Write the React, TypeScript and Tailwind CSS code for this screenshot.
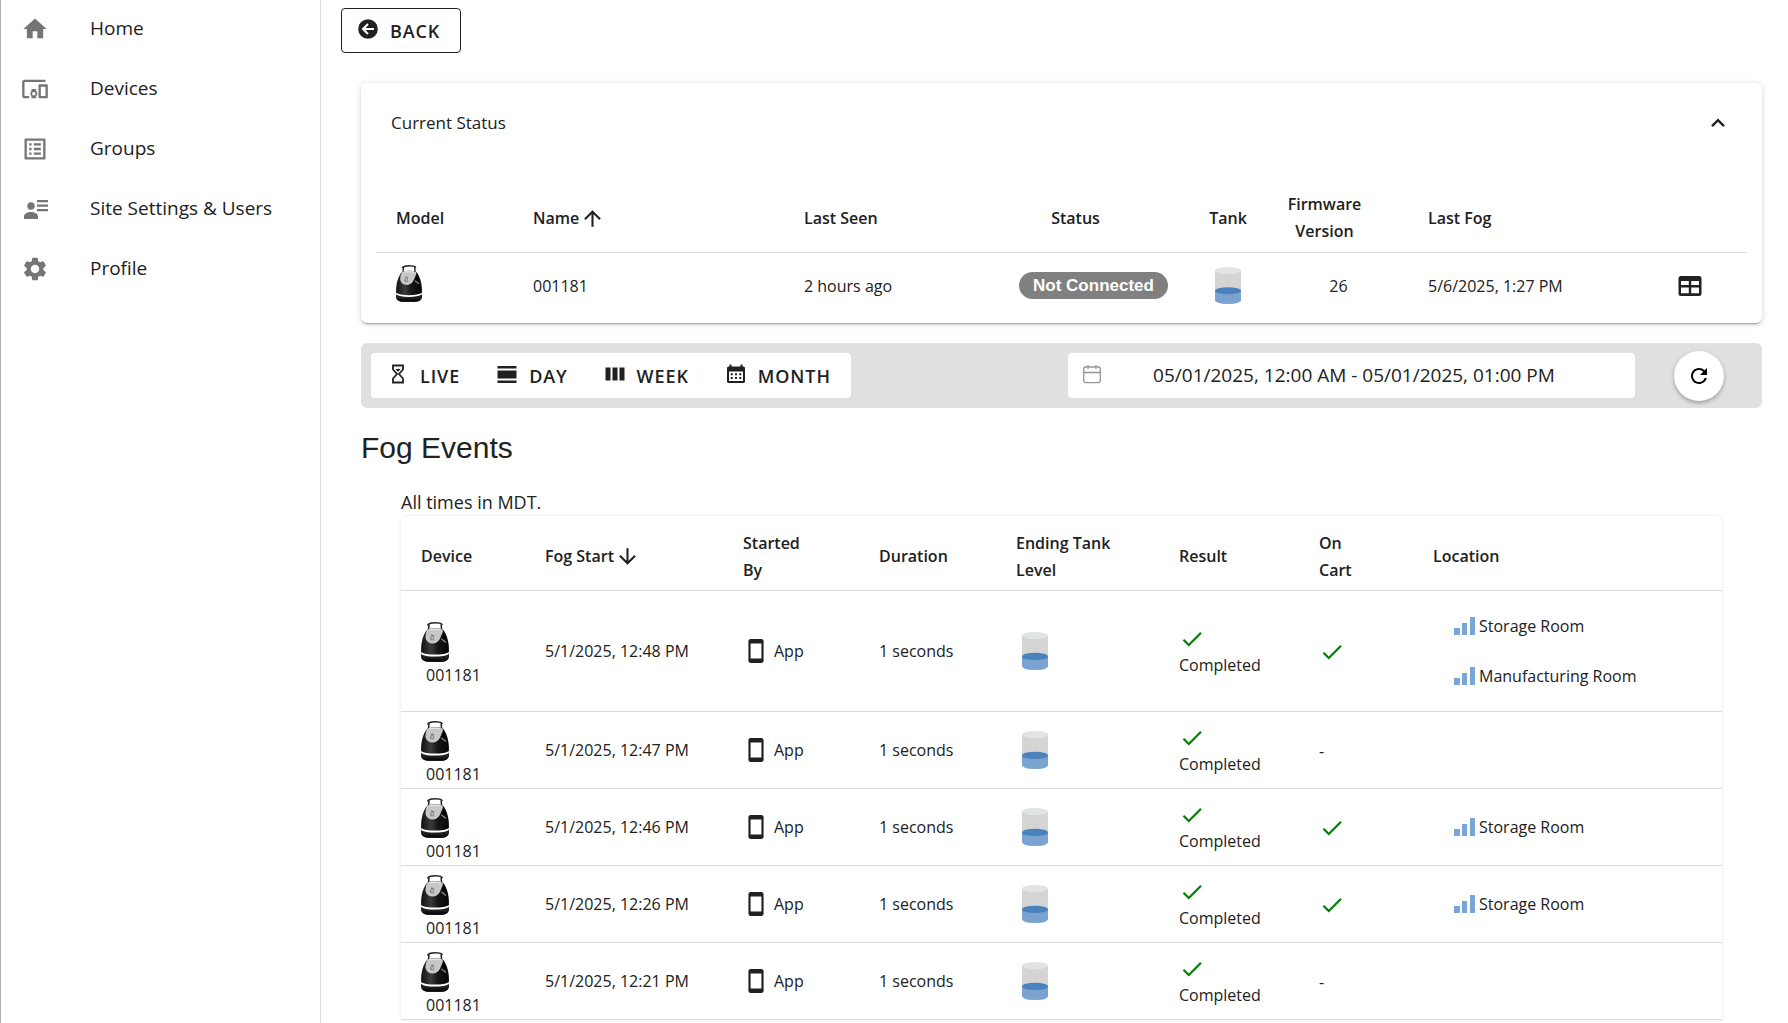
import { useState } from 'react'
import type { ReactNode } from 'react'
import {
  MdArrowDownward,
  MdArrowUpward,
  MdCheck,
  MdDevicesOther,
  MdHome,
  MdOutlineListAlt,
  MdRefresh,
  MdSettings,
  MdStayCurrentPortrait,
} from 'react-icons/md'

interface FogEvent {
  device: string
  start: string
  onCart: boolean
  locations: string[]
}

const EVENTS: FogEvent[] = [
  { device: '001181', start: '5/1/2025, 12:48 PM', onCart: true, locations: ['Storage Room', 'Manufacturing Room'] },
  { device: '001181', start: '5/1/2025, 12:47 PM', onCart: false, locations: [] },
  { device: '001181', start: '5/1/2025, 12:46 PM', onCart: true, locations: ['Storage Room'] },
  { device: '001181', start: '5/1/2025, 12:26 PM', onCart: true, locations: ['Storage Room'] },
  { device: '001181', start: '5/1/2025, 12:21 PM', onCart: false, locations: [] },
]

const NAV: { label: string; icon: ReactNode }[] = [
  { label: 'Home', icon: <MdHome size={28} /> },
  { label: 'Devices', icon: <MdDevicesOther size={28} /> },
  { label: 'Groups', icon: <MdOutlineListAlt size={28} /> },
  { label: 'Site Settings & Users', icon: <UserDetailsIcon /> },
  { label: 'Profile', icon: <MdSettings size={28} /> },
]

export default function App() {
  return (
    <div className="flex min-h-screen border-l border-[#b0b0b0] bg-white font-['Open_Sans',sans-serif] text-base text-[#212121]">
      <Sidebar />
      <main className="min-w-0 flex-1 pt-2">
        <div className="px-5">
          <button className="flex h-[45px] items-center gap-3 rounded border border-[#212121] pr-5 pl-4 text-lg font-semibold tracking-wider">
            <span className="-mt-1">
              <BackIcon />
            </span>
            <span>BACK</span>
          </button>
        </div>
        <div className="pt-[30px] pr-[26px] pl-10">
          <StatusCard />
          <Toolbar />
          <h1 className="mt-5 font-['Liberation_Sans',sans-serif] text-3xl leading-10">Fog Events</h1>
          <section className="mt-5 px-10">
            <p className="text-lg leading-7">All times in MDT.</p>
            <EventTable />
          </section>
        </div>
      </main>
    </div>
  )
}

function Sidebar() {
  return (
    <nav className="w-80 shrink-0 border-r border-[#dcdcdc]">
      <ul>
        {NAV.map((item) => (
          <li key={item.label}>
            <a href="#" className="flex h-[60px] items-center pb-[3px] pl-5 text-[19px]">
              <span className="flex w-[69px] shrink-0 text-[#757575]">{item.icon}</span>
              {item.label}
            </a>
          </li>
        ))}
      </ul>
    </nav>
  )
}

function StatusCard() {
  const [open, setOpen] = useState(true)

  return (
    <section className="rounded-md bg-white shadow-[0_2px_2px_-1px_rgba(0,0,0,0.35),0_1px_6px_rgba(0,0,0,0.16)]">
      <button
        onClick={() => setOpen(!open)}
        className="flex h-20 w-full items-center justify-between pr-9 pl-[30px] text-left text-[17px]"
      >
        <span>Current Status</span>
        <svg width="16" height="10" viewBox="0 0 16 10" className={open ? '' : 'rotate-180'}>
          <path d="M2 8.2 8 2.2l6 6" fill="none" stroke="currentColor" strokeWidth="2.4" />
        </svg>
      </button>
      {open && (
        <div className="px-[15px] pt-[22px] pb-1">
          <table className="w-full table-fixed">
            <colgroup>
              <col className="w-[137px]" />
              <col className="w-[271px]" />
              <col className="w-[216px]" />
              <col className="w-[187px]" />
              <col className="w-[82px]" />
              <col className="w-[139px]" />
              <col className="w-[225px]" />
              <col className="w-[114px]" />
            </colgroup>
            <thead>
              <tr className="h-[67px] border-b border-[#dcdcdc] text-left leading-[27px]">
                <th className="px-5 font-semibold">Model</th>
                <th className="px-5 font-semibold">
                  <span className="flex items-center gap-px">
                    Name
                    <MdArrowUpward size={25} />
                  </span>
                </th>
                <th className="px-5 font-semibold">Last Seen</th>
                <th className="pr-9 text-center font-semibold">Status</th>
                <th className="text-center font-semibold">Tank</th>
                <th className="pr-7 text-center font-semibold">
                  Firmware
                  <br />
                  Version
                </th>
                <th className="px-5 font-semibold">Last Fog</th>
                <th />
              </tr>
            </thead>
            <tbody>
              <tr className="h-[67px]">
                <td className="px-5">
                  <DeviceIcon className="-mt-1 h-[37px] w-[26px]" />
                </td>
                <td className="px-5">001181</td>
                <td className="px-5">2 hours ago</td>
                <td className="text-center">
                  <span className="inline-block rounded-full bg-[#808080] px-[14px] font-['Liberation_Sans',sans-serif] text-[17px] leading-[27px] font-bold text-white">
                    Not Connected
                  </span>
                </td>
                <td>
                  <TankIcon className="mx-auto h-[37px] w-[26px]" />
                </td>
                <td className="text-center">26</td>
                <td className="px-5">5/6/2025, 1:27 PM</td>
                <td>
                  <button className="mx-auto block" aria-label="Details">
                    <GridIcon />
                  </button>
                </td>
              </tr>
            </tbody>
          </table>
        </div>
      )}
    </section>
  )
}

function Toolbar() {
  return (
    <div className="mt-5 flex h-[65px] items-center rounded-md bg-[#e0e0e0] pr-[38px] pl-[10px]">
      <div className="flex h-[45px] rounded bg-white">
        <RangeButton label="LIVE" icon={<HourglassIcon />} />
        <RangeButton label="DAY" icon={<DayIcon />} />
        <RangeButton label="WEEK" icon={<WeekIcon />} />
        <RangeButton label="MONTH" icon={<MonthIcon />} />
      </div>
      <label className="ml-auto flex h-[45px] w-[567px] items-center rounded bg-white pl-[15px]">
        <CalendarIcon />
        <input
          type="text"
          aria-label="Date range"
          defaultValue="05/01/2025, 12:00 AM - 05/01/2025, 01:00 PM"
          className="min-w-0 flex-1 pr-7 text-center text-[19px] outline-none"
        />
      </label>
      <button
        aria-label="Refresh"
        className="ml-[39px] flex size-[50px] items-center justify-center rounded-full bg-white text-black shadow-[0_2px_4px_rgba(0,0,0,0.3)]"
      >
        <MdRefresh size={24} />
      </button>
    </div>
  )
}

function RangeButton({ label, icon }: { label: string; icon: ReactNode }) {
  return (
    <button className="flex items-center gap-[11px] pr-5 pl-4 text-lg font-semibold tracking-wider">
      <span className="-mt-1">{icon}</span>
      <span>{label}</span>
    </button>
  )
}

function EventTable() {
  return (
    <div className="rounded-t-md pt-2 shadow-[0_0_3px_rgba(0,0,0,0.12)]">
      <table className="w-full table-fixed">
        <colgroup>
          <col className="w-[124px]" />
          <col className="w-[198px]" />
          <col className="w-[136px]" />
          <col className="w-[137px]" />
          <col className="w-[163px]" />
          <col className="w-[140px]" />
          <col className="w-[114px]" />
          <col className="w-[309px]" />
        </colgroup>
        <thead>
          <tr className="h-[66px] border-b border-[#dcdcdc] text-left leading-[27px]">
            <th className="px-5 font-semibold">Device</th>
            <th className="px-5 font-semibold">
              <span className="flex items-center gap-px">
                Fog Start
                <MdArrowDownward size={25} />
              </span>
            </th>
            <th className="px-5 font-semibold">
              Started
              <br />
              By
            </th>
            <th className="px-5 font-semibold">Duration</th>
            <th className="px-5 font-semibold">
              Ending Tank
              <br />
              Level
            </th>
            <th className="px-5 font-semibold">Result</th>
            <th className="px-5 font-semibold">
              On
              <br />
              Cart
            </th>
            <th className="px-5 font-semibold">Location</th>
          </tr>
        </thead>
        <tbody>
          {EVENTS.map((event) => (
            <EventRow key={event.start} event={event} />
          ))}
        </tbody>
      </table>
    </div>
  )
}

function EventRow({ event }: { event: FogEvent }) {
  return (
    <tr className="h-[77px] border-b border-[#dcdcdc]">
      <td className="px-5 pt-[9px]">
        <DeviceIcon className="h-10 w-7" />
        <span className="ml-[5px] block leading-[27px]">{event.device}</span>
      </td>
      <td className="px-5 whitespace-nowrap">{event.start}</td>
      <td className="px-5">
        <span className="flex items-center gap-[5px]">
          <MdStayCurrentPortrait size={26} />
          App
        </span>
      </td>
      <td className="px-5">1 seconds</td>
      <td className="px-[26px]">
        <TankIcon className="h-[38px] w-[26px]" />
      </td>
      <td className="px-5 pt-1">
        <MdCheck size={26} className="text-[#008000]" />
        <span className="block leading-[27px]">Completed</span>
      </td>
      <td className="px-5 pt-[2px]">{event.onCart ? <MdCheck size={26} className="text-[#008000]" /> : '-'}</td>
      <td className="pl-[41px]">
        <ul className={event.locations.length > 1 ? 'py-[10px]' : ''}>
          {event.locations.map((name) => (
            <li key={name} className="flex h-[50px] items-center gap-1">
              <SignalIcon />
              {name}
            </li>
          ))}
        </ul>
      </td>
    </tr>
  )
}

/* Product and status drawings */

function DeviceIcon({ className }: { className: string }) {
  return (
    <svg viewBox="0 0 28 40" preserveAspectRatio="none" className={`block ${className}`}>
      <defs>
        <linearGradient id="device-body" x1="0" x2="1" y1="0" y2="0">
          <stop offset="0" stopColor="#111" />
          <stop offset="0.35" stopColor="#3c3c3c" />
          <stop offset="0.6" stopColor="#161616" />
          <stop offset="1" stopColor="#050505" />
        </linearGradient>
        <linearGradient id="device-base" x1="0" x2="0" y1="0" y2="1">
          <stop offset="0" stopColor="#2c2c2c" />
          <stop offset="1" stopColor="#000" />
        </linearGradient>
      </defs>
      <path d="M7.500 7.500 8 3.200 7 2.800Q8.500.8 14 .8t7 1.600l-.8.8.4 4.800" fill="none" stroke="#222" strokeWidth="1.500" />
      <path
        d="M6.500 7.500Q14 4.800 22 7.500C25 11 27.600 18 27.900 26V34.500Q27 39.700 20 39.800H8Q1 39.700.1 34.500V26C.5 18 3 11 6.500 7.500Z"
        fill="url(#device-body)"
      />
      <path d="M.1 33.500Q14 37 27.900 33.500v1.800Q27 39.700 20 39.800H8Q1 39.700.1 35.300Z" fill="url(#device-base)" />
      <path d="M.1 30Q4 32.600 14 32.600T27.900 30v1.900Q24 34.500 14 34.500T.1 31.900Z" fill="#fff" />
      <path d="M6.500 7.500Q14 5 21.800 7.500 22.500 9.500 20.500 13 18 21.300 12 21.600 5.500 21.600 4.400 15.500 4.300 11 6.500 7.500Z" fill="#c6c8c8" />
      <path d="M8.500 7.800q5-1.200 10.500 0" fill="none" stroke="#ececec" />
      <path d="m11 12.500-1.800 4.200h1.600M11 12.500l2 4.500M12 14.500l1-1.500M9.500 17.800h3.500" fill="none" stroke="#777" strokeWidth=".9" />
      <path d="m20.500 17 4.500 3.500" stroke="#8f8f8f" strokeWidth="1.100" />
      <path d="m22.500 10.500 3 7-4.500-1.500Z" fill="#000" />
    </svg>
  )
}

function TankIcon({ className }: { className: string }) {
  return (
    <svg viewBox="0 0 26 38" preserveAspectRatio="none" className={`block ${className}`}>
      <path d="M0 3.5h26V34.5Q24 38 13 38T0 34.5Z" fill="#d4d4d4" />
      <ellipse cx="13" cy="3.6" rx="13" ry="3.6" fill="#e2e4e4" />
      <path d="M0 24.5h26v10Q24 38 13 38T0 34.5Z" fill="#7ba3cf" />
      <ellipse cx="13" cy="24.4" rx="13" ry="3.7" fill="#4a82bd" />
    </svg>
  )
}

function SignalIcon() {
  return (
    <svg width="21" height="18" viewBox="0 0 21 18" fill="#78a5da">
      <path d="M0 11h6v7H0zM8 6h5v12H8zM16 0h5v18h-5z" />
    </svg>
  )
}

/* Small glyphs */

function UserDetailsIcon() {
  return (
    <svg width="28" height="28" viewBox="0 0 28 28" fill="currentColor">
      <circle cx="10" cy="11" r="3.7" />
      <path d="M3 24v-2.500C3 18.500 6.500 17 10 17s7 1.500 7 4.500V24ZM16 5h11v2.300H16zM16 9.500h11v2.300H16zM16 14h11v2.300H16z" />
    </svg>
  )
}

function BackIcon() {
  return (
    <svg width="20" height="20" viewBox="0 0 20 20">
      <circle cx="10" cy="10" r="9.800" fill="currentColor" />
      <path d="M16 10H5.500M10 5l-5 5 5 5" fill="none" stroke="#fff" strokeWidth="2" />
    </svg>
  )
}

function HourglassIcon() {
  return (
    <svg width="22" height="22" viewBox="0 0 22 22" fill="none" stroke="currentColor" strokeWidth="1.800">
      <path d="M6 2.500h10v4L12 11l4 4.500v4H6v-4L10 11 6 6.500Z" />
      <path d="M8.500 6h5L11 9Z" fill="currentColor" stroke="none" />
    </svg>
  )
}

function DayIcon() {
  return (
    <svg width="22" height="22" viewBox="0 0 22 22" fill="currentColor">
      <path d="M1.500 3h19v2.500h-19zM1.500 7.500h19v8h-19zM1.500 17.500h19V20h-19z" />
    </svg>
  )
}

function WeekIcon() {
  return (
    <svg width="22" height="22" viewBox="0 0 22 22" fill="currentColor">
      <path d="M1.500 4.500h5v13h-5zM8.500 4.500h5v13h-5zM15.500 4.500h5v13h-5z" />
    </svg>
  )
}

function MonthIcon() {
  return (
    <svg width="22" height="22" viewBox="0 0 22 22" fill="currentColor">
      <path
        fillRule="evenodd"
        d="M4.500 1.500h2v2h9v-2h2v2h1q1.500 0 1.500 1.500v13.500q0 1.500-1.500 1.500h-15Q2 20 2 18.500V5q0-1.500 1.500-1.500h1ZM4 8.500V18h14V8.500Z"
      />
      <path d="M5.800 10.300h2v2h-2zM10 10.300h2v2h-2zM14.200 10.300h2v2h-2zM5.800 14h2v2h-2zM10 14h2v2h-2zM14.200 14h2v2h-2z" />
    </svg>
  )
}

function CalendarIcon() {
  return (
    <svg width="18" height="20" viewBox="0 0 18 20" fill="none" stroke="#959595" className="-mt-1 shrink-0" strokeWidth="1.300">
      <rect x=".7" y="3" width="16.600" height="15.600" rx="2" />
      <path d="M.7 8.500h16.600M5 1v4M13 1v4" />
    </svg>
  )
}

function GridIcon() {
  return (
    <svg width="24" height="22" viewBox="0 0 24 22" fill="currentColor">
      <path
        fillRule="evenodd"
        d="M3 1h18q2.500 0 2.500 2.500v15q0 2.500-2.500 2.500H3Q.5 21 .5 18.500v-15Q.5 1 3 1ZM3 6v4h7.800V6ZM13.200 6v4H21V6ZM3 12.500v5.800h7.800v-5.800ZM13.200 12.500v5.800H21v-5.800Z"
      />
    </svg>
  )
}
